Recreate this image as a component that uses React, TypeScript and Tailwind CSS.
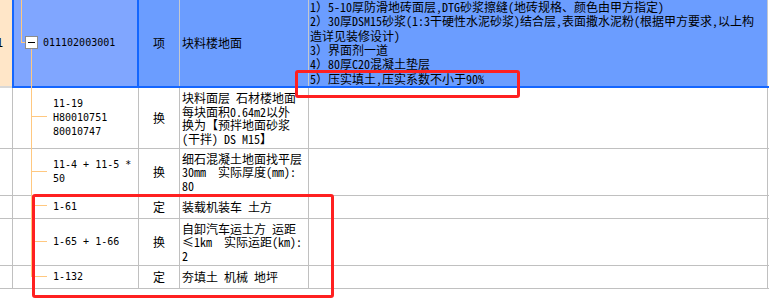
import React from "react";

const FONT = '"Noto Sans Mono CJK SC","Noto Sans CJK SC",monospace';
const CODE = '"DejaVu Sans Mono","Noto Sans Mono CJK SC",monospace';

type Row = { h: string; code: string[]; kind: string; desc: string[] };

const rows: Row[] = [
  { h: "h-[61px]", code: ["11-19", "H80010751", "80010747"], kind: "换", desc: ["块料面层 石材楼地面", "每块面积0.64m2以外", "换为【预拌地面砂浆", "(干拌) DS M15】"] },
  { h: "h-[47px]", code: ["11-4 + 11-5 *", "50"], kind: "换", desc: ["细石混凝土地面找平层", "30mm  实际厚度(mm):", "80"] },
  { h: "h-[23px]", code: ["1-61"], kind: "定", desc: ["装载机装车 土方"] },
  { h: "h-[47px]", code: ["1-65 + 1-66"], kind: "换", desc: ["自卸汽车运土方 运距", "≤1km  实际运距(km):", "2"] },
  { h: "h-[23px]", code: ["1-132"], kind: "定", desc: ["夯填土 机械 地坪"] },
];

export default function App() {
  return (
    <div className="relative w-[769px] h-[300px] bg-white overflow-hidden text-black" style={{ fontFamily: FONT }}>
      {/* top (selected) row */}
      <div className="flex h-[88px]">
        <div className="w-[12px] h-[88px] border-b-2 border-[#d8d8d8] bg-[#ffe6c8] overflow-hidden flex items-center">
          <span className="ml-[-4px] text-[12px]" style={{ fontFamily: CODE }}>1</span>
        </div>
        <div className="flex flex-1 border-b-2 border-[#1466ff]">
          <div className="w-[127px] bg-[#80a6ff] border-l-2 border-r-2 border-[#1466ff] flex items-center pl-[29px]">
            <span className="text-[10px] leading-[14px]" style={{ fontFamily: CODE }}>011102003001</span>
          </div>
          <div className="w-[41px] bg-[#6b9dff] border-r border-[#c4c8d0] flex items-center justify-center text-[12px]">项</div>
          <div className="w-[129px] bg-[#6b9dff] border-r border-[#c4c8d0] flex items-center pl-[2px] text-[12px]">块料楼地面</div>
          <div className="w-[459px] bg-[#6b9dff] border-r border-[#c4c8d0] flex items-center pl-[1px] text-[12px] leading-[14.3px] whitespace-nowrap overflow-hidden">
            <div>
              <div>1）5-10厚防滑地砖面层,DTG砂浆擦缝(地砖规格、颜色由甲方指定)</div>
              <div>2）30厚DSM15砂浆(1:3干硬性水泥砂浆)结合层,表面撒水泥粉(根据甲方要求,以上构</div>
              <div>造详见装修设计)</div>
              <div>3）界面剂一道</div>
              <div>4）80厚C20混凝土垫层</div>
              <div>5）压实填土,压实系数不小于90%</div>
            </div>
          </div>
        </div>
      </div>

      {rows.map((r, i) => (
        <div key={i} className={`flex ${r.h} border-b border-[#c0c0c0]`}>
          <div className="w-[13px] border-r border-[#c0c0c0]" />
          <div className="w-[126px] border-r border-[#c0c0c0] flex items-center pl-[40px]">
            <div className="text-[10px] leading-[14px] whitespace-nowrap" style={{ fontFamily: CODE }}>
              {r.code.map((c, j) => (
                <div key={j} className="whitespace-pre">{c}</div>
              ))}
            </div>
          </div>
          <div className="w-[41px] border-r border-[#c0c0c0] flex items-center justify-center text-[12px]">{r.kind}</div>
          <div className="w-[129px] border-r border-[#c0c0c0] flex items-center pl-[2px] text-[12px] leading-[13.5px]">
            <div>
              {r.desc.map((d, j) => (
                <div key={j} className="whitespace-pre">{d}</div>
              ))}
            </div>
          </div>
          <div className="w-[459px] border-r border-[#c0c0c0]" />
        </div>
      ))}

      {/* tree lines */}
      <svg className="absolute left-0 top-0 pointer-events-none" width="60" height="290">
        <g stroke="#ffc880" strokeWidth="1" fill="none">
          <line x1="21.5" y1="0" x2="21.5" y2="42.5" />
          <line x1="21" y1="42.5" x2="26" y2="42.5" />
          <line x1="31.5" y1="48" x2="31.5" y2="277" />
          <line x1="32" y1="116.5" x2="47" y2="116.5" />
          <line x1="32" y1="171.5" x2="47" y2="171.5" />
          <line x1="32" y1="205.5" x2="47" y2="205.5" />
          <line x1="32" y1="241.5" x2="47" y2="241.5" />
          <line x1="32" y1="276.5" x2="47" y2="276.5" />
        </g>
        <rect x="25.5" y="36.5" width="12" height="12" fill="#ffffff" stroke="#8c8c8c" />
        <line x1="28" y1="42.5" x2="35" y2="42.5" stroke="#000" strokeWidth="1" />
      </svg>

      {/* red annotation boxes */}
      <div className="absolute left-[295px] top-[70px] w-[225px] h-[28px] border-[3px] border-[#ff2020] rounded-[3px]" />
      <div className="absolute left-[32px] top-[194px] w-[302px] h-[104px] border-[3px] border-[#ff2020] rounded-[3px]" />
    </div>
  );
}
